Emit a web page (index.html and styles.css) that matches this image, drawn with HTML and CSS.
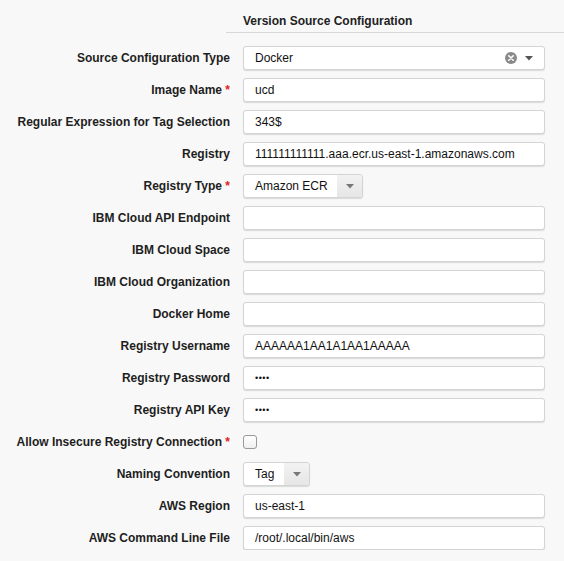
FILE: index.html
```html
<!DOCTYPE html>
<html>
<head>
<meta charset="utf-8">
<link rel="stylesheet" href="styles.css">
</head>
<body>
<div class="page">
  <div class="section-head"><span class="section-title">Version Source Configuration</span></div>
  <div class="form">
    <div class="label">Source Configuration Type</div>
    <div class="field input select-wide">
      <span class="val">Docker</span>
      <span class="icons">
        <svg class="clear" width="12" height="12" viewBox="0 0 12 12"><circle cx="6" cy="6" r="6" fill="#8a8a8a"/><path d="M3.8 3.8 L8.2 8.2 M8.2 3.8 L3.8 8.2" stroke="#fff" stroke-width="1.6" stroke-linecap="round"/></svg>
        <svg class="caret" width="8" height="5" viewBox="0 0 8 5"><path d="M0 0 H8 L4 4.5 Z" fill="#555"/></svg>
      </span>
    </div>

    <div class="label">Image Name <span class="req">*</span></div>
    <div class="field input"><span class="val">ucd</span></div>

    <div class="label">Regular Expression for Tag Selection</div>
    <div class="field input"><span class="val">343$</span></div>

    <div class="label">Registry</div>
    <div class="field input"><span class="val">111111111111.aaa.ecr.us-east-1.amazonaws.com</span></div>

    <div class="label">Registry Type <span class="req">*</span></div>
    <div class="field"><div class="dropdown dd-ecr"><span class="dd-val">Amazon ECR</span><span class="dd-arrow"><svg width="8" height="5" viewBox="0 0 8 5"><path d="M0 0 H8 L4 4.5 Z" fill="#777"/></svg></span></div></div>

    <div class="label">IBM Cloud API Endpoint</div>
    <div class="field input"></div>

    <div class="label">IBM Cloud Space</div>
    <div class="field input"></div>

    <div class="label">IBM Cloud Organization</div>
    <div class="field input"></div>

    <div class="label">Docker Home</div>
    <div class="field input"></div>

    <div class="label">Registry Username</div>
    <div class="field input"><span class="val">AAAAAA1AA1A1AA1AAAAA</span></div>

    <div class="label">Registry Password</div>
    <div class="field input"><span class="val dots">••••</span></div>

    <div class="label">Registry API Key</div>
    <div class="field input"><span class="val dots">••••</span></div>

    <div class="label">Allow Insecure Registry Connection <span class="req">*</span></div>
    <div class="field"><span class="checkbox"></span></div>

    <div class="label">Naming Convention</div>
    <div class="field"><div class="dropdown dd-tag"><span class="dd-val">Tag</span><span class="dd-arrow"><svg width="8" height="5" viewBox="0 0 8 5"><path d="M0 0 H8 L4 4.5 Z" fill="#777"/></svg></span></div></div>

    <div class="label">AWS Region</div>
    <div class="field input"><span class="val">us-east-1</span></div>

    <div class="label">AWS Command Line File</div>
    <div class="field input"><span class="val">/root/.local/bin/aws</span></div>
  </div>
</div>
</body>
</html>
```

FILE: styles.css
```css
html, body {
  margin: 0;
  padding: 0;
  background: #f8f8f8;
}
body {
  font-family: "Liberation Sans", Arial, Helvetica, sans-serif;
  font-size: 12px;
  color: #222;
}
.page {
  padding-top: 14px;
}
.section-head {
  margin-left: 226px;
  padding-left: 17px;
  height: 18px;
  border-bottom: 1px solid #d8d8d8;
}
.section-title {
  font-weight: bold;
  font-size: 12px;
  line-height: 15px;
  color: #222;
}
.form {
  display: grid;
  grid-template-columns: 230px 302px;
  column-gap: 13px;
  row-gap: 8px;
  margin-top: 13px;
}
.label {
  align-self: center;
  text-align: right;
  font-weight: bold;
  white-space: nowrap;
  color: #1e1e1e;
  line-height: 16px;
}
.req {
  color: #e02020;
}
.field {
  height: 24px;
  display: flex;
  align-items: center;
}
.input {
  box-sizing: border-box;
  background: #fff;
  border: 1px solid #d4d4d4;
  border-radius: 3px;
  box-shadow: 0 1px 1px rgba(0, 0, 0, 0.12);
  padding: 0 11px;
}
.val {
  white-space: nowrap;
  color: #111;
}
.dots {
  font-size: 9px;
  letter-spacing: 0.5px;
}
.select-wide {
  justify-content: space-between;
  padding-right: 11px;
}
.icons {
  display: flex;
  align-items: center;
  gap: 8px;
}
.clear, .caret {
  display: block;
}
.dropdown {
  box-sizing: border-box;
  height: 24px;
  display: flex;
  border: 1px solid #d4d4d4;
  border-radius: 3px;
  box-shadow: 0 1px 1px rgba(0, 0, 0, 0.12);
  overflow: hidden;
  background: #fff;
}
.dd-ecr { width: 120px; }
.dd-tag { width: 67px; }
.dd-val {
  flex: 1;
  display: flex;
  align-items: center;
  padding-left: 11px;
  color: #111;
}
.dd-arrow {
  width: 25px;
  display: flex;
  align-items: center;
  justify-content: center;
  background: linear-gradient(#f2f2f2, #e6e6e6);
}
.dd-arrow svg { display: block; }
.checkbox {
  box-sizing: border-box;
  width: 14px;
  height: 14px;
  border: 1px solid #999;
  border-radius: 3px;
  background: linear-gradient(#fff, #f0f0f0);
}
```
